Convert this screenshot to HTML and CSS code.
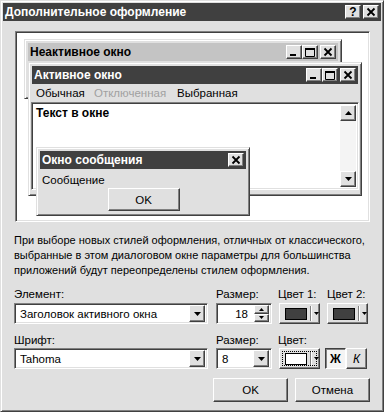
FILE: index.html
```html
<!DOCTYPE html>
<html lang="ru">
<head>
    <meta charset="UTF-8">
    <meta name="viewport" content="width=device-width, initial-scale=1.0">
    <title>Дополнительное оформление</title>
    <link rel="stylesheet" href="styles.css">
</head>
<body>

<div class="dialog">
    <!-- заголовок диалога -->
    <div class="caption">
        <span class="caption-text">Дополнительное оформление</span>
        <span class="raised cap-btn help">?</span>
        <span class="raised cap-btn">
            <svg width="14" height="12" viewBox="0 0 14 12"><path d="M3.5 2.5 L10.5 9.5 M10.5 2.5 L3.5 9.5" stroke="#000" stroke-width="1.8"/></svg>
        </span>
    </div>

    <div class="content">
        <!-- образец -->
        <div class="preview">
            <div class="win inactive">
                <div class="win-title">
                    <span>Неактивное окно</span>
                    <div class="tbtns">
                        <span class="raised tbtn"><svg width="14" height="12" viewBox="0 0 14 12"><rect x="3" y="8" width="6" height="2" fill="#000"/></svg></span>
                        <span class="raised tbtn"><svg width="14" height="12" viewBox="0 0 14 12"><path d="M2.5 2.5 h9 v8 h-9 z" fill="none" stroke="#000"/><rect x="2" y="2" width="10" height="2" fill="#000"/></svg></span>
                        <span class="raised tbtn gap"><svg width="14" height="12" viewBox="0 0 14 12"><path d="M3.5 2.5 L10.5 9.5 M10.5 2.5 L3.5 9.5" stroke="#000" stroke-width="1.8"/></svg></span>
                    </div>
                </div>
            </div>

            <div class="win active">
                <div class="win-title">
                    <span>Активное окно</span>
                    <div class="tbtns">
                        <span class="raised tbtn"><svg width="14" height="12" viewBox="0 0 14 12"><rect x="3" y="8" width="6" height="2" fill="#000"/></svg></span>
                        <span class="raised tbtn"><svg width="14" height="12" viewBox="0 0 14 12"><path d="M2.5 2.5 h9 v8 h-9 z" fill="none" stroke="#000"/><rect x="2" y="2" width="10" height="2" fill="#000"/></svg></span>
                        <span class="raised tbtn gap"><svg width="14" height="12" viewBox="0 0 14 12"><path d="M3.5 2.5 L10.5 9.5 M10.5 2.5 L3.5 9.5" stroke="#000" stroke-width="1.8"/></svg></span>
                    </div>
                </div>
                <div class="menu">
                    <span>Обычная</span>
                    <span class="disabled">Отключенная</span>
                    <span>Выбранная</span>
                </div>
                <div class="sunken text-area">
                    <div class="text">Текст в окне</div>
                    <div class="scrollbar">
                        <span class="raised sb-btn"><svg width="7" height="4" viewBox="0 0 7 4"><polygon points="0,4 7,4 3.5,0" fill="#000"/></svg></span>
                        <span class="raised sb-btn"><svg width="7" height="4" viewBox="0 0 7 4"><polygon points="0,0 7,0 3.5,4" fill="#000"/></svg></span>
                    </div>
                </div>
            </div>

            <div class="win msgbox">
                <div class="win-title">
                    <span>Окно сообщения</span>
                    <div class="tbtns">
                        <span class="raised tbtn"><svg width="14" height="12" viewBox="0 0 14 12"><path d="M3.5 2.5 L10.5 9.5 M10.5 2.5 L3.5 9.5" stroke="#000" stroke-width="1.8"/></svg></span>
                    </div>
                </div>
                <div class="msg">Сообщение</div>
                <div class="raised btn msg-ok">OK</div>
            </div>
        </div>

        <p class="note">При выборе новых стилей оформления, отличных от классического,<br>выбранные в этом диалоговом окне параметры для большинства<br>приложений будут переопределены стилем оформления.</p>

        <!-- элементы и шрифты -->
        <div class="form">
            <label class="lbl">Элемент:</label>
            <label class="lbl">Размер:</label>
            <label class="lbl">Цвет 1:</label>
            <label class="lbl">Цвет 2:</label>

            <div class="sunken combo wide">
                <span class="value">Заголовок активного окна</span>
                <span class="raised drop"><svg width="7" height="4" viewBox="0 0 7 4"><polygon points="0,0 7,0 3.5,4" fill="#000"/></svg></span>
            </div>
            <div class="sunken combo spin">
                <span class="value right">18</span>
                <span class="spin-btns">
                    <span class="raised spin-btn"><svg width="5" height="3" viewBox="0 0 5 3"><polygon points="0,3 5,3 2.5,0" fill="#000"/></svg></span>
                    <span class="raised spin-btn"><svg width="5" height="3" viewBox="0 0 5 3"><polygon points="0,0 5,0 2.5,3" fill="#000"/></svg></span>
                </span>
            </div>
            <div class="raised color-btn first">
                <span class="swatch dark"></span>
                <span class="sep"></span>
                <svg width="5" height="3" viewBox="0 0 5 3"><polygon points="0,0 5,0 2.5,3" fill="#000"/></svg>
            </div>
            <div class="raised color-btn">
                <span class="swatch dark"></span>
                <span class="sep"></span>
                <svg width="5" height="3" viewBox="0 0 5 3"><polygon points="0,0 5,0 2.5,3" fill="#000"/></svg>
            </div>

            <label class="lbl">Шрифт:</label>
            <label class="lbl">Размер:</label>
            <label class="lbl">Цвет:</label>
            <span></span>

            <div class="sunken combo wide">
                <span class="value">Tahoma</span>
                <span class="raised drop"><svg width="7" height="4" viewBox="0 0 7 4"><polygon points="0,0 7,0 3.5,4" fill="#000"/></svg></span>
            </div>
            <div class="sunken combo spin">
                <span class="value">8</span>
                <span class="raised drop"><svg width="7" height="4" viewBox="0 0 7 4"><polygon points="0,0 7,0 3.5,4" fill="#000"/></svg></span>
            </div>
            <div class="raised color-btn first focus">
                <span class="swatch light"></span>
                <span class="sep"></span>
                <svg width="5" height="3" viewBox="0 0 5 3"><polygon points="0,0 5,0 2.5,3" fill="#000"/></svg>
            </div>
            <div class="style-btns">
                <span class="pressed style-btn bold">Ж</span>
                <span class="raised style-btn italic">К</span>
            </div>
        </div>

        <div class="actions">
            <span class="raised btn action">OK</span>
            <span class="raised btn action">Отмена</span>
        </div>
    </div>
</div>

</body>
</html>
```

FILE: styles.css
```css
body {
    margin: 0;
    font-family: "Liberation Sans", Arial, sans-serif;
    font-size: 11px;
    color: #000;
    background-color: #e0e0e0;
}
.dialog {
    box-sizing: border-box;
    width: 384px;
    height: 412px;
    background-color: #e0e0e0;
    border: 1px solid;
    border-color: #e0e0e0 #404040 #404040 #e0e0e0;
    box-shadow: inset 1px 1px #fff, inset -1px -1px #808080;
    padding: 2px;
}

/* общие рамки */
.raised {
    box-sizing: border-box;
    background-color: #e0e0e0;
    border: 1px solid;
    border-color: #fff #404040 #404040 #fff;
    box-shadow: inset -1px -1px #808080;
}
.pressed {
    box-sizing: border-box;
    border: 1px solid;
    border-color: #404040 #fff #fff #404040;
    box-shadow: inset 1px 1px #808080;
}
.sunken {
    box-sizing: border-box;
    background-color: #fff;
    border: 1px solid;
    border-color: #808080 #fff #fff #808080;
    box-shadow: inset 1px 1px #404040, inset -1px -1px #e0e0e0;
}

/* заголовок */
.caption {
    display: flex;
    align-items: center;
    height: 18px;
    background-color: #404040;
    padding: 0 2px 0 2px;
}
.caption-text {
    flex: 1;
    color: #fff;
    font-weight: bold;
    font-size: 12px;
}
.cap-btn {
    display: flex;
    align-items: center;
    justify-content: center;
    width: 16px;
    height: 14px;
    margin-left: 2px;
}
.help {
    font-weight: bold;
    font-size: 12px;
    line-height: 12px;
}

.content {
    padding: 10px 11px 0 11px;
}

/* образец */
.preview {
    position: relative;
    box-sizing: border-box;
    width: 355px;
    height: 191px;
    margin-left: 1px;
    background-color: #fff;
    border: 1px solid;
    border-color: #808080 #fff #fff #808080;
    box-shadow: inset 1px 1px #404040, inset -1px -1px #e0e0e0;
}
.win {
    position: absolute;
    box-sizing: border-box;
    background-color: #e0e0e0;
    border: 1px solid;
    border-color: #e0e0e0 #404040 #404040 #e0e0e0;
    box-shadow: inset 1px 1px #fff, inset -1px -1px #808080;
    padding: 3px;
}
.win-title {
    display: flex;
    align-items: center;
    height: 18px;
    padding-left: 2px;
    font-weight: bold;
    font-size: 12px;
    color: #fff;
    background-color: #404040;
}
.win-title span:first-child {
    flex: 1;
}
.inactive {
    left: 8px;
    top: 7px;
    width: 318px;
    height: 60px;
}
.inactive .win-title {
    color: #000;
    background-color: #c4c4c4;
}
.tbtns {
    display: flex;
    margin-right: 2px;
}
.tbtn {
    display: flex;
    align-items: center;
    justify-content: center;
    width: 16px;
    height: 14px;
}
.tbtn.gap {
    margin-left: 2px;
}
.active {
    left: 12px;
    top: 30px;
    width: 334px;
    height: 134px;
}
.menu {
    display: grid;
    grid-template-columns: 58px 83px auto;
    height: 18px;
    align-items: center;
    padding-left: 4px;
    font-size: 11.5px;
}
.disabled {
    color: #a0a0a0;
}
.text-area {
    display: flex;
    height: 88px;
    margin-left: -1px;
    margin-right: -1px;
    padding: 2px;
}
.text {
    flex: 1;
    font-weight: bold;
    font-size: 12px;
    padding: 1px 2px;
}
.scrollbar {
    display: flex;
    flex-direction: column;
    justify-content: space-between;
    width: 16px;
    background-color: #f4f4f4;
}
.sb-btn {
    display: flex;
    align-items: center;
    justify-content: center;
    height: 16px;
}
.msgbox {
    left: 20px;
    top: 115px;
    width: 214px;
    height: 69px;
    display: flex;
    flex-direction: column;
}
.msg {
    padding: 5px 2px 2px;
    font-size: 11.5px;
}
.btn {
    display: flex;
    align-items: center;
    justify-content: center;
    font-size: 11.5px;
}
.msg-ok {
    width: 72px;
    height: 23px;
    align-self: center;
    margin-left: 1px;
}

.note {
    margin: 11px 0 9px 0;
    line-height: 15px;
    white-space: nowrap;
}

/* форма */
.form {
    display: grid;
    grid-template-columns: 202px 62px 49px 41px;
    grid-template-rows: 16px 30px 15px 21px;
}
.lbl {
    line-height: 14px;
    font-size: 11.5px;
}
.combo {
    display: flex;
    align-items: center;
    height: 21px;
    padding: 2px;
}
.wide {
    width: 194px;
}
.spin {
    width: 56px;
}
.value {
    flex: 1;
    padding-left: 3px;
    font-size: 11.5px;
}
.value.right {
    text-align: right;
    padding-right: 6px;
}
.drop {
    display: flex;
    align-items: center;
    justify-content: center;
    width: 16px;
    height: 17px;
}
.spin-btns {
    display: flex;
    flex-direction: column;
    width: 15px;
    height: 17px;
}
.spin-btn {
    display: flex;
    align-items: center;
    justify-content: center;
    height: 8.5px;
}
.color-btn {
    display: flex;
    align-items: center;
    width: 41px;
    height: 21px;
    padding-left: 5px;
}
.color-btn.first {
    margin-left: 1px;
}
.swatch {
    box-sizing: border-box;
    width: 22px;
    height: 12px;
    border: 1px solid #000;
}
.swatch.dark {
    background-color: #404040;
}
.swatch.light {
    background-color: #fff;
}
.sep {
    width: 1px;
    height: 15px;
    margin: 0 3px 0 3px;
    background-color: #808080;
    box-shadow: 1px 0 #fff;
}
.focus {
    outline: 1px dotted #000;
    outline-offset: -4px;
}
.style-btns {
    display: flex;
    margin-left: -2px;
}
.style-btn {
    display: flex;
    align-items: center;
    justify-content: center;
    width: 21px;
    height: 21px;
}
.bold {
    font-weight: bold;
    font-size: 12px;
    background-color: #f4f4f4;
}
.italic {
    font-style: italic;
    font-size: 12px;
}

.actions {
    display: flex;
    justify-content: flex-end;
    gap: 7px;
    margin-top: 9px;
}
.action {
    width: 75px;
    height: 24px;
}
```
